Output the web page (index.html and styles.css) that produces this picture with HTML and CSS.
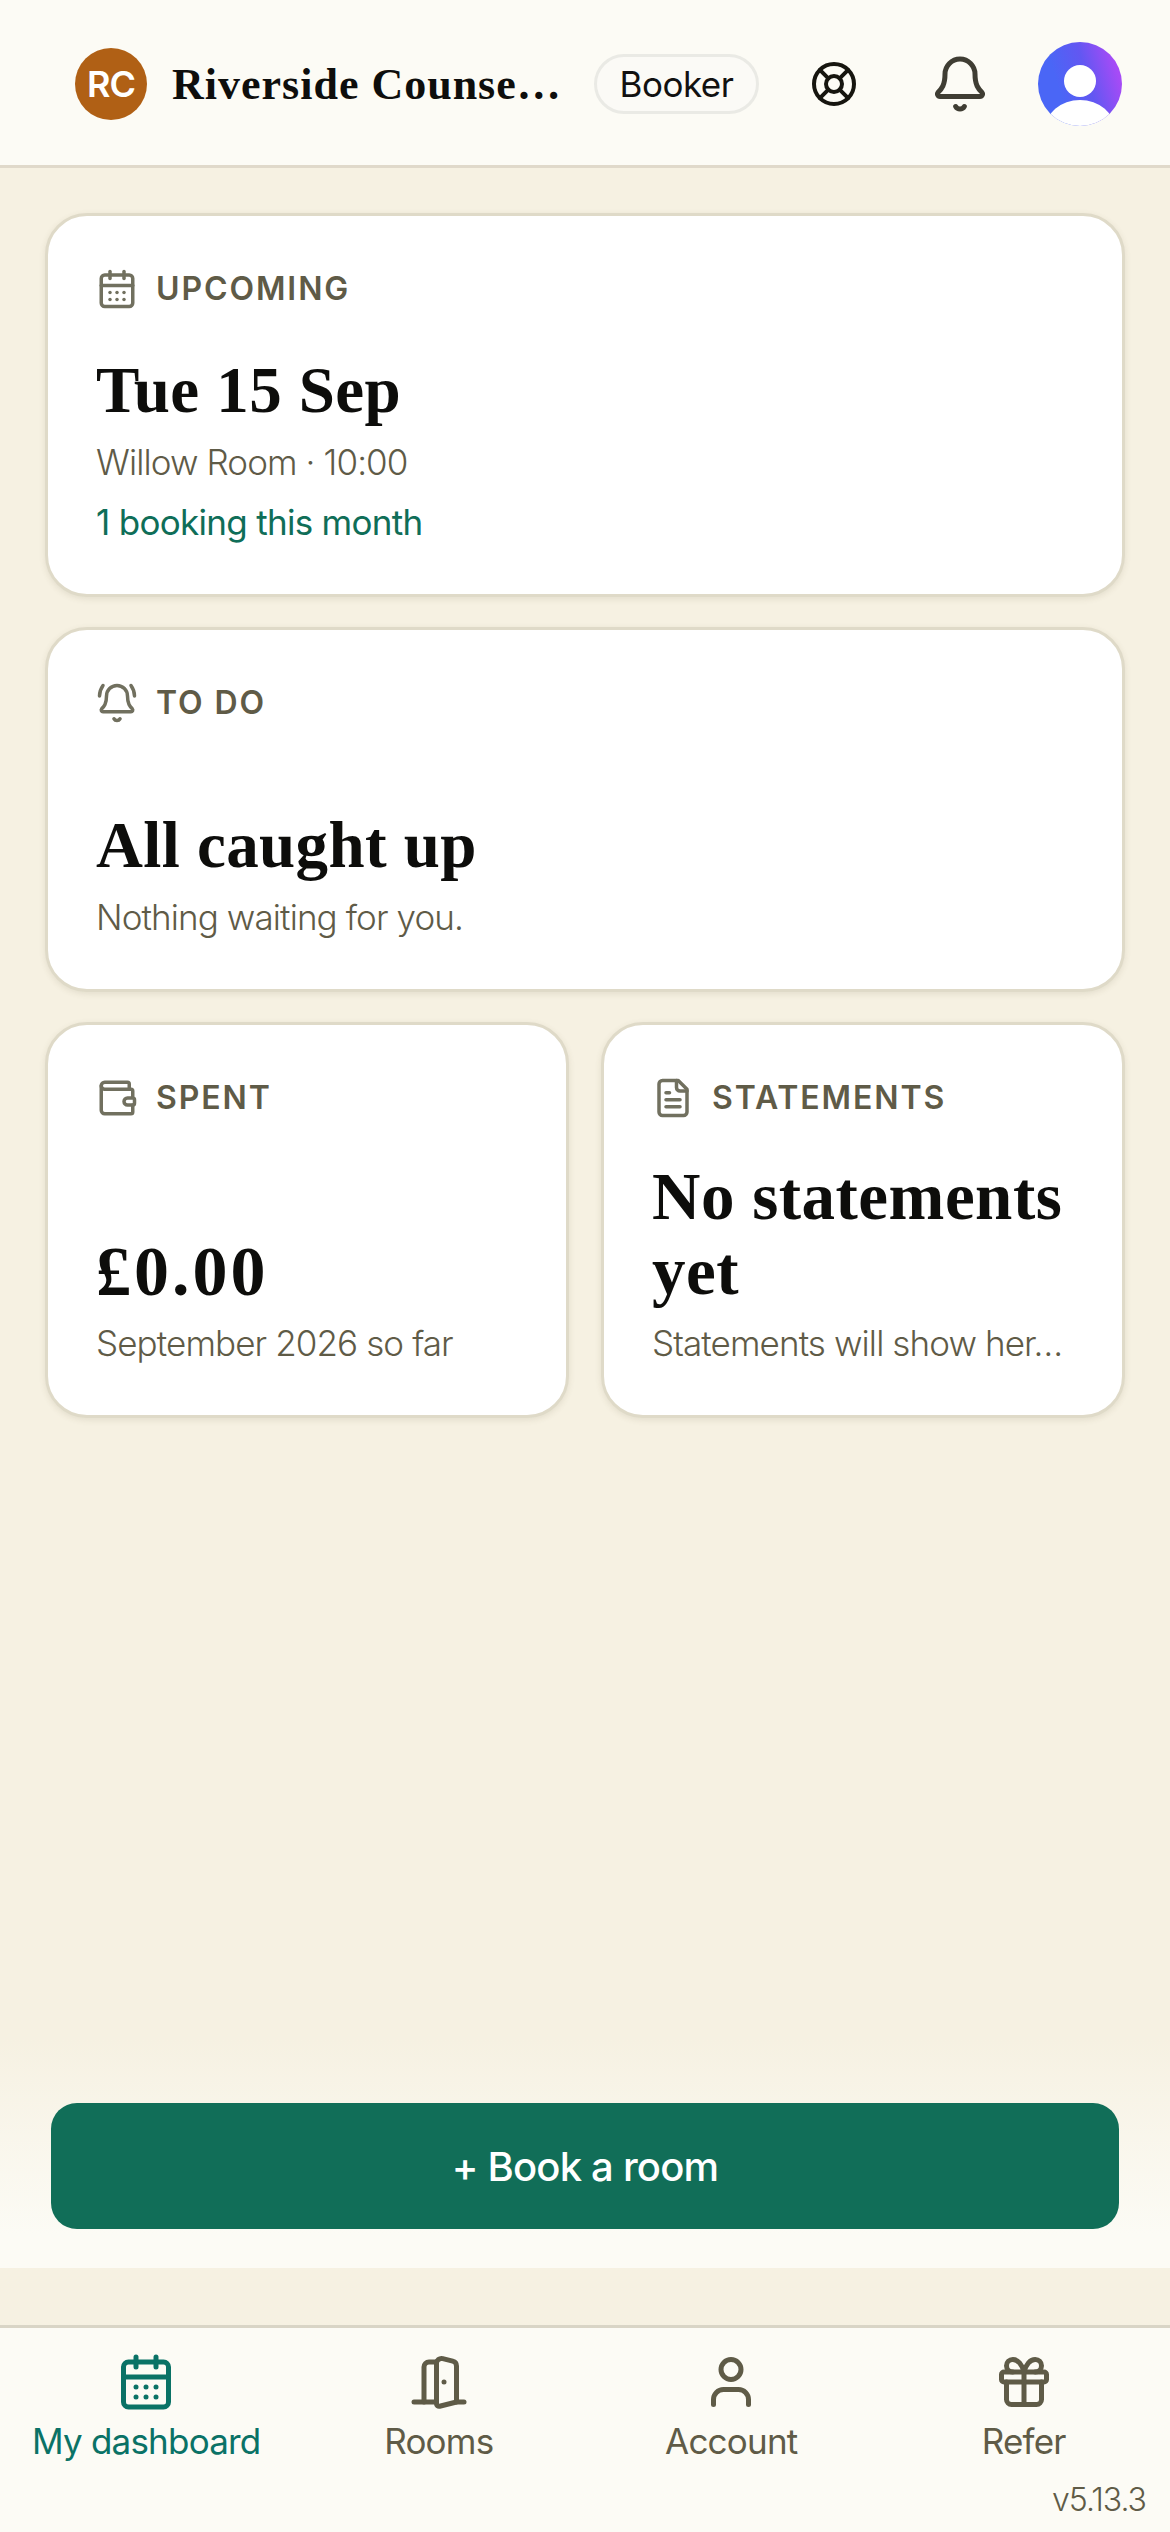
FILE: index.html
```html
<!DOCTYPE html>
<html lang="en">
<head>
    <meta charset="utf-8">
    <title>Dashboard</title>
    <link rel="stylesheet" href="styles.css">
</head>
<body>
    <div class="app">
        <header class="topbar">
            <div class="logo">RC</div>
            <div class="orgname">Riverside Counse…</div>
            <div class="rolebadge">Booker</div>
            <svg class="icon helpicon" viewBox="0 0 24 24">
                <circle cx="12" cy="12" r="10"/><circle cx="12" cy="12" r="4"/>
                <path d="m4.93 4.93 4.24 4.24"/><path d="m14.83 9.17 4.24-4.24"/>
                <path d="m14.83 14.83 4.24 4.24"/><path d="m9.17 14.83-4.24 4.24"/>
            </svg>
            <svg class="icon bellicon" viewBox="0 0 24 24">
                <path d="M10.268 21a2 2 0 0 0 3.464 0"/>
                <path d="M3.262 15.326A1 1 0 0 0 4 17h16a1 1 0 0 0 .74-1.673C19.41 13.956 18 12.499 18 8A6 6 0 0 0 6 8c0 4.499-1.411 5.956-2.738 7.326"/>
            </svg>
            <svg class="avatar" viewBox="0 0 84 84">
                <defs>
                    <linearGradient id="avatarfill" x1="0" y1="0.65" x2="1" y2="0.35">
                        <stop offset="0.25" stop-color="#4a66f6"/>
                        <stop offset="0.6" stop-color="#6257f2"/>
                        <stop offset="0.95" stop-color="#a64bf6"/>
                    </linearGradient>
                    <clipPath id="avatarclip"><circle cx="42" cy="42" r="42"/></clipPath>
                </defs>
                <g clip-path="url(#avatarclip)">
                    <rect width="84" height="84" fill="url(#avatarfill)"/>
                    <circle cx="42" cy="39" r="16" fill="#fff"/>
                    <ellipse cx="42" cy="88" rx="35" ry="30" fill="#fff"/>
                </g>
            </svg>
        </header>

        <main class="content">
            <section class="card">
                <div class="cardlabel">
                    <svg class="icon labelicon" viewBox="0 0 24 24">
                        <path d="M8 2v4"/><path d="M16 2v4"/><rect width="18" height="18" x="3" y="4" rx="2"/><path d="M3 10h18"/>
                        <path d="M8 14h.01"/><path d="M12 14h.01"/><path d="M16 14h.01"/><path d="M8 18h.01"/><path d="M12 18h.01"/><path d="M16 18h.01"/>
                    </svg>
                    UPCOMING
                </div>
                <div class="cardbody withnote">
                    <h2 class="cardtitle">Tue 15 Sep</h2>
                    <p class="cardsub">Willow Room · 10:00</p>
                    <p class="cardnote">1 booking this month</p>
                </div>
            </section>

            <section class="card">
                <div class="cardlabel">
                    <svg class="icon labelicon" viewBox="0 0 24 24">
                        <path d="M10.268 21a2 2 0 0 0 3.464 0"/><path d="M22 8c0-2.3-.8-4.3-2-6"/>
                        <path d="M3.262 15.326A1 1 0 0 0 4 17h16a1 1 0 0 0 .74-1.673C19.41 13.956 18 12.499 18 8a6 6 0 0 0-12 0c0 4.499-1.411 5.956-2.738 7.326"/>
                        <path d="M4 2C2.8 3.7 2 5.7 2 8"/>
                    </svg>
                    TO DO
                </div>
                <div class="cardbody">
                    <h2 class="cardtitle">All caught up</h2>
                    <p class="cardsub">Nothing waiting for you.</p>
                </div>
            </section>

            <div class="cardrow">
                <section class="card">
                    <div class="cardlabel">
                        <svg class="icon labelicon" viewBox="0 0 24 24">
                            <path d="M19 7V4a1 1 0 0 0-1-1H5a2 2 0 0 0 0 4h15a1 1 0 0 1 1 1v4h-3a2 2 0 0 0 0 4h3a1 1 0 0 0 1-1v-2a1 1 0 0 0-1-1"/>
                            <path d="M3 5v14a2 2 0 0 0 2 2h15a1 1 0 0 0 1-1v-4"/>
                        </svg>
                        SPENT
                    </div>
                    <div class="cardbody">
                        <h2 class="cardtitle amount">£0.00</h2>
                        <p class="cardsub">September 2026 so far</p>
                    </div>
                </section>

                <section class="card">
                    <div class="cardlabel">
                        <svg class="icon labelicon" viewBox="0 0 24 24">
                            <path d="M15 2H6a2 2 0 0 0-2 2v16a2 2 0 0 0 2 2h12a2 2 0 0 0 2-2V7Z"/><path d="M14 2v4a2 2 0 0 0 2 2h4"/>
                            <path d="M10 9H8"/><path d="M16 13H8"/><path d="M16 17H8"/>
                        </svg>
                        STATEMENTS
                    </div>
                    <div class="cardbody">
                        <h2 class="cardtitle spaced">No statements yet</h2>
                        <p class="cardsub">Statements will show her…</p>
                    </div>
                </section>
            </div>
        </main>

        <div class="actionbar">
            <button class="bookbutton">+ Book a room</button>
        </div>

        <nav class="bottomnav">
            <div class="navitems">
                <div class="navitem active">
                    <svg class="icon navicon" viewBox="0 0 24 24">
                        <path d="M8 2v4"/><path d="M16 2v4"/><rect width="18" height="18" x="3" y="4" rx="2"/><path d="M3 10h18"/>
                        <path d="M8 14h.01"/><path d="M12 14h.01"/><path d="M16 14h.01"/><path d="M8 18h.01"/><path d="M12 18h.01"/><path d="M16 18h.01"/>
                    </svg>
                    My dashboard
                </div>
                <div class="navitem">
                    <svg class="icon navicon" viewBox="0 0 24 24">
                        <path d="M11 20H2"/><path d="M11 4.562v16.157a1 1 0 0 0 1.242.97L19 20V5.562a2 2 0 0 0-1.515-1.94l-4-1A2 2 0 0 0 11 4.561z"/>
                        <path d="M11 4H8a2 2 0 0 0-2 2v14"/><path d="M14 12h.01"/><path d="M22 20h-3"/>
                    </svg>
                    Rooms
                </div>
                <div class="navitem">
                    <svg class="icon navicon" viewBox="0 0 24 24">
                        <path d="M19 21v-2a4 4 0 0 0-4-4H9a4 4 0 0 0-4 4v2"/><circle cx="12" cy="7" r="4"/>
                    </svg>
                    Account
                </div>
                <div class="navitem">
                    <svg class="icon navicon" viewBox="0 0 24 24">
                        <rect x="3" y="8" width="18" height="4" rx="1"/><path d="M12 8v13"/>
                        <path d="M19 12v7a2 2 0 0 1-2 2H7a2 2 0 0 1-2-2v-7"/>
                        <path d="M7.5 8a2.5 2.5 0 0 1 0-5A4.8 8 0 0 1 12 8a4.8 8 0 0 1 4.5-5 2.5 2.5 0 0 1 0 5"/>
                    </svg>
                    Refer
                </div>
            </div>
            <div class="version">v5.13.3</div>
        </nav>
    </div>
</body>
</html>
```

FILE: styles.css
```css
html, body {
    margin: 0;
    background: #f6f1e2;
}
body {
    font-family: "Inter", "Liberation Sans", sans-serif;
    color: #5f5b47;
}
.app {
    display: flex;
    flex-direction: column;
    min-height: 2532px;
}
.icon {
    fill: none;
    stroke: currentColor;
    stroke-width: 2;
    stroke-linecap: round;
    stroke-linejoin: round;
    flex: none;
}

/* top bar */
.topbar {
    display: flex;
    align-items: center;
    box-sizing: border-box;
    height: 168px;
    padding: 3px 48px 0 75px;
    background: #fcfbf5;
    border-bottom: 3px solid #e0d9ca;
}
.logo {
    flex: none;
    display: flex;
    align-items: center;
    justify-content: center;
    width: 72px;
    height: 72px;
    border-radius: 50%;
    background: #b06015;
    color: #fff;
    font-size: 36px;
    font-weight: 600;
    letter-spacing: -1px;
}
.orgname {
    flex: 1;
    min-width: 0;
    margin-left: 25px;
    font-family: "Liberation Serif", serif;
    font-size: 44px;
    font-weight: 700;
    letter-spacing: 1px;
    color: #0e0e0c;
    white-space: nowrap;
}
.rolebadge {
    flex: none;
    width: 159px;
    height: 54px;
    line-height: 54px;
    text-align: center;
    border: 3px solid #eaeae5;
    border-radius: 30px;
    background: #fbfaf6;
    color: #111;
    font-size: 35px;
    letter-spacing: -0.5px;
}
.helpicon {
    width: 48px;
    height: 48px;
    margin-left: 51px;
    color: #16150f;
}
.bellicon {
    width: 60px;
    height: 60px;
    margin-left: 72px;
    color: #3f3d33;
}
.avatar {
    flex: none;
    width: 84px;
    height: 84px;
    margin-left: 48px;
}

/* cards */
.content {
    flex: 1;
    display: flex;
    flex-direction: column;
    gap: 30px;
    padding: 45px 45px 0;
}
.cardrow {
    display: grid;
    grid-template-columns: 1fr 1fr;
    gap: 32px;
}
.card {
    display: flex;
    flex-direction: column;
    min-width: 0;
    min-height: 365px;
    box-sizing: border-box;
    padding: 52px 48px 44px;
    background: #fff;
    border: 3px solid #dfdac8;
    border-radius: 42px;
    box-shadow: 0 2px 6px rgba(90, 80, 50, 0.12);
}
.cardlabel {
    display: flex;
    align-items: center;
    gap: 18px;
    font-size: 32px;
    font-weight: 600;
    line-height: 42px;
    letter-spacing: 1.9px;
}
.labelicon {
    width: 42px;
    height: 42px;
    color: #71705f;
}
.cardbody {
    margin-top: auto;
    padding-top: 40px;
}
.cardbody.withnote {
    padding-top: 43px;
}
.cardtitle {
    margin: 0;
    font-family: "Liberation Serif", serif;
    font-size: 65px;
    font-weight: 700;
    line-height: 75px;
    letter-spacing: 0.4px;
    color: #0d0d0b;
}
.cardtitle.amount {
    font-size: 70px;
    letter-spacing: 3px;
}
.cardtitle.spaced {
    font-size: 67px;
    letter-spacing: 0.5px;
}
.cardsub, .cardnote {
    margin: 0;
    font-size: 35px;
    line-height: 56px;
    font-weight: 300;
    letter-spacing: -0.9px;
    white-space: nowrap;
}
.cardsub {
    margin-top: 6px;
}
.cardnote {
    margin-top: 4px;
    font-weight: 400;
    letter-spacing: -0.7px;
    color: #0f6e58;
}

/* book button */
.actionbar {
    margin-bottom: 57px;
    padding: 64px 51px 39px;
    background: linear-gradient(to bottom, #f6f1e2, #fcfbf5 85%);
}
.bookbutton {
    display: block;
    width: 100%;
    height: 126px;
    border: none;
    border-radius: 26px;
    background: #116e58;
    color: #fff;
    font-family: inherit;
    font-size: 40px;
    font-weight: 500;
    letter-spacing: -0.8px;
}

/* bottom nav */
.bottomnav {
    height: 204px;
    background: #fcfbf5;
    border-top: 3px solid #d9d5c6;
}
.navitems {
    display: grid;
    grid-template-columns: repeat(4, 1fr);
    padding-top: 24px;
}
.navitem {
    display: flex;
    flex-direction: column;
    align-items: center;
    font-size: 35px;
    line-height: 44px;
    letter-spacing: -0.8px;
}
.navitem.active {
    color: #0a7266;
}
.navicon {
    width: 60px;
    height: 60px;
    margin-bottom: 7px;
}
.version {
    padding: 17px 24px 0 0;
    text-align: right;
    font-size: 32px;
    font-weight: 300;
    letter-spacing: -1px;
}
```
